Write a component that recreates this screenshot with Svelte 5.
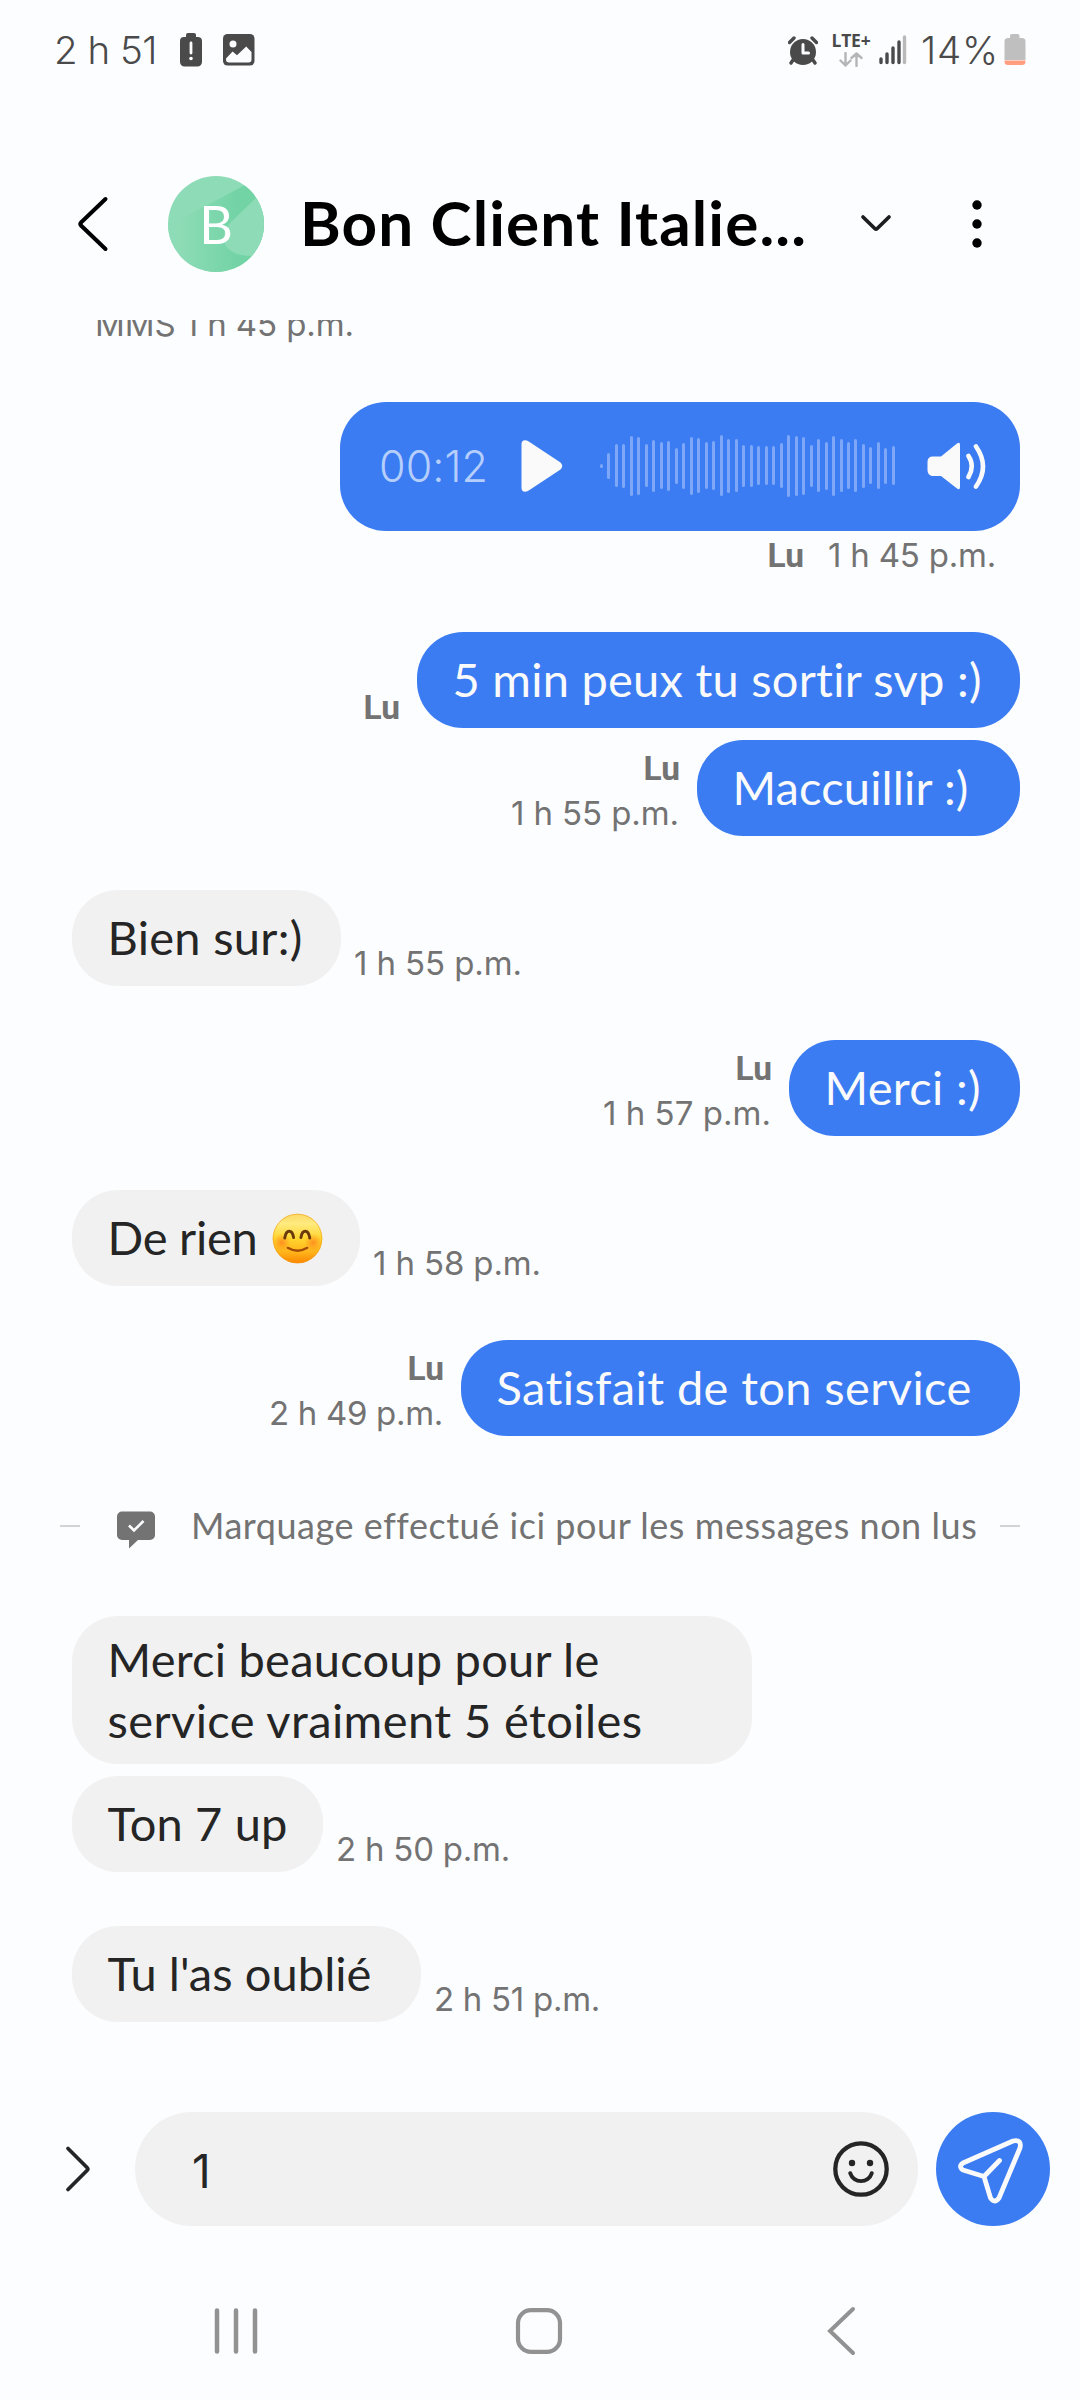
<script>
  const levels = [
    4, 26, 43, 44, 60, 58, 43, 52, 47, 50, 36, 46, 58, 55, 47, 49, 61, 54, 53, 42,
    42, 39, 39, 39, 45, 62, 60, 58, 42, 53, 48, 60, 53, 47, 53, 44, 37, 47, 36, 39
  ];

  const before = [
    { out: true, width: 603, lines: [{ t: '5 min peux tu sortir svp :)', w: 530 }], sender: true },
    { out: true, grouped: true, width: 323, lines: [{ t: 'Maccuillir :)', w: 236 }], sender: true, time: '1 h 55 p.m.', tw: 168 },
    { out: false, width: 269, lines: [{ t: 'Bien sur:)', w: 195 }], time: '1 h 55 p.m.', tw: 168 },
    { out: true, width: 231, lines: [{ t: 'Merci :)', w: 156.5 }], sender: true, time: '1 h 57 p.m.', tw: 168 },
    { out: false, width: 288, lines: [{ t: 'De rien', w: 150 }], emoji: true, time: '1 h 58 p.m.', tw: 168 },
    { out: true, width: 559, lines: [{ t: 'Satisfait de ton service', w: 476 }], sender: true, time: '2 h 49 p.m.', tw: 174 }
  ];

  const after = [
    { out: false, width: 680, lines: [{ t: 'Merci beaucoup pour le', w: 492 }, { t: 'service vraiment 5 étoiles', w: 535 }] },
    { out: false, grouped: true, width: 251, lines: [{ t: 'Ton 7 up', w: 180 }], time: '2 h 50 p.m.', tw: 174 },
    { out: false, width: 349, lines: [{ t: "Tu l'as oublié", w: 264 }], time: '2 h 51 p.m.', tw: 166 }
  ];

  // Tracks a line of text so that it fills the given width.
  function track(node, width) {
    const natural = node.getBoundingClientRect().width;
    node.style.letterSpacing = `${(width - natural) / node.textContent.length}px`;
  }
</script>

{#snippet row(m)}
  <div class="row" class:out={m.out} class:grouped={m.grouped}>
    <div class="bubble" class:double={m.lines.length > 1} style:width="{m.width}px">
      {#each m.lines as line}
        <div class="line"><span class="fit" use:track={line.w}>{line.t}</span>{#if m.emoji}<svg class="emoji" viewBox="0 0 52 52">
              <defs>
                <linearGradient id="face" x1="0" y1="0" x2="0" y2="1">
                  <stop offset="0" stop-color="#fbd766" />
                  <stop offset=".2" stop-color="#ffeb80" />
                  <stop offset=".5" stop-color="#ffd52e" />
                  <stop offset=".78" stop-color="#ffb31a" />
                  <stop offset="1" stop-color="#fb8500" />
                </linearGradient>
                <radialGradient id="cheek">
                  <stop offset="0" stop-color="#ff7a1c" stop-opacity=".75" />
                  <stop offset="1" stop-color="#ff8a1c" stop-opacity="0" />
                </radialGradient>
              </defs>
              <circle cx="26" cy="26" r="25.3" fill="url(#face)" />
              <circle cx="26" cy="26" r="24.8" fill="none" stroke="#ef9a1a" stroke-opacity=".55" />
              <circle cx="10" cy="30" r="9" fill="url(#cheek)" />
              <circle cx="42" cy="30" r="9" fill="url(#cheek)" />
              <path d="M13 25.5C14.500 16.500 20.500 16.500 22 25M29.500 25C31 16.500 37 16.500 38.500 25.500" fill="none" stroke="#6b3a0c" stroke-width="3" stroke-linecap="round" />
              <path d="M16 35.500Q26 41.500 36 35.500" fill="none" stroke="#a34a08" stroke-width="2.300" stroke-linecap="round" />
            </svg>{/if}</div>
      {/each}
    </div>
    {#if m.sender || m.time}
      <div class="meta" class:alone={m.sender && !m.time}>
        {#if m.sender}<div class="sender">Lu</div>{/if}
        {#if m.time}<div class="time"><span class="fit" use:track={m.tw}>{m.time}</span></div>{/if}
      </div>
    {/if}
  </div>
{/snippet}

<div class="screen">
  <div class="status">
    <span class="clock"><span class="fit" use:track={103}>2 h 51</span></span>
    <svg class="s-alert" width="24" height="34" viewBox="0 0 24 34">
      <path fill="#4a4a4a" d="M7 4V2a2 2 0 0 1 2-2h6a2 2 0 0 1 2 2v2h2.500A4 4 0 0 1 23 8v21a4.500 4.500 0 0 1-4.500 4.500h-13A4.500 4.500 0 0 1 1 29V8a4 4 0 0 1 4-4z" />
      <path d="M12 10v10" stroke="#fcfdff" stroke-width="2.800" stroke-linecap="round" />
      <circle cx="12" cy="25.500" r="1.800" fill="#fcfdff" />
    </svg>
    <svg class="s-image" width="32" height="32" viewBox="0 0 32 32">
      <rect width="31.500" height="31.500" rx="4.500" fill="#4a4a4a" />
      <circle cx="10" cy="10" r="3.500" fill="#fcfdff" />
      <path fill="#fcfdff" d="M3 24.500L9.600 17.500l4.400 3.800 9.200-8.800 5.300 5.500v7.500a3 3 0 0 1-3 3H6a3 3 0 0 1-3-3z" />
    </svg>
    <span class="grow"></span>
    <svg class="s-alarm" width="30" height="29" viewBox="0 0 30 29">
      <circle cx="15" cy="16" r="13" fill="#4a4a4a" />
      <path d="M1.500 6.500L6 2M28.500 6.500L24 2M5 24l-2 3M25 24l2 3" stroke="#4a4a4a" stroke-width="3.400" stroke-linecap="round" fill="none" />
      <path d="M15 8.500v8.500h5.500" fill="none" stroke="#fcfdff" stroke-width="3" stroke-linecap="round" stroke-linejoin="round" />
    </svg>
    <div class="network">
      <span class="lte"><span class="fit" use:track={39}>LTE+</span></span>
      <svg width="24" height="15" viewBox="0 0 24 15" fill="none" stroke="#b5b5b6" stroke-width="2.400" stroke-linecap="round" stroke-linejoin="round">
        <path d="M6.500 1v12.500M1.500 8.500l5 5 5-5M17.500 14V1.500M12.500 6l5-4.500 5 4.500" />
      </svg>
    </div>
    <svg class="s-signal" width="28" height="30" viewBox="0 0 28 30" stroke-width="3.400" stroke-linecap="round">
      <path stroke="#4a4a4a" d="M2 24v3.500M8 19v8.500M14 13v14.500M20 7v20.500" />
      <path stroke="#b9b9ba" d="M25.500 2v25.500" />
    </svg>
    <span class="percent"><span class="fit" use:track={78}>14%</span></span>
    <svg class="s-batt" width="22" height="32" viewBox="0 0 22 32">
      <path fill="#bfbfc0" d="M6 4V2a2 2 0 0 1 2-2h5.500a2 2 0 0 1 2 2v2h2.500A3.500 3.500 0 0 1 21.500 7.500V26H.5V7.500A3.500 3.500 0 0 1 4 4z" />
      <path fill="#ff9e80" d="M.5 26.500h21v1a3.500 3.500 0 0 1-3.500 3.500H4a3.500 3.500 0 0 1-3.500-3.500z" />
    </svg>
  </div>

  <header>
    <svg class="h-back" width="32" height="58" viewBox="0 0 32 58">
      <path d="M28.500 4L4 27.500Q2.500 29 4 30.500L28.500 54" fill="none" stroke="#000" stroke-width="4" stroke-linecap="round" />
    </svg>
    <div class="avatar">
      <svg width="96" height="96" viewBox="0 0 96 96">
        <defs>
          <clipPath id="disc"><circle cx="48" cy="48" r="48" /></clipPath>
          <linearGradient id="beam" x1="0" y1="0" x2="1" y2="0">
            <stop offset=".1" stop-color="#8edcb7" />
            <stop offset=".75" stop-color="#72d3a5" />
          </linearGradient>
        </defs>
        <g clip-path="url(#disc)">
          <rect width="96" height="96" fill="#8edcb7" />
          <path d="M0 96V50L77 9 96 20V96z" fill="url(#beam)" />
          <path d="M90 20L63 46Q51 60 58 70Q65 80 84 80L110 70V0z" fill="#8edcb7" />
        </g>
      </svg>
      <span>B</span>
    </div>
    <h1><span class="fit" use:track={507}>Bon Client Italie...</span></h1>
    <svg class="h-down" width="32" height="20" viewBox="0 0 32 20">
      <path d="M3 4l12 11.700q1 .900 2 0L29 4" fill="none" stroke="#1d1d1f" stroke-width="3.700" stroke-linecap="round" />
    </svg>
    <svg class="h-more" width="12" height="50" viewBox="0 0 12 50">
      <circle cx="6" cy="6" r="4.700" /><circle cx="6" cy="25" r="4.700" /><circle cx="6" cy="44" r="4.700" />
    </svg>
  </header>

  <main>
    <div class="time mms"><span class="fit" use:track={259}>MMS 1 h 45 p.m.</span></div>

    <div class="voice">
      <span class="duration"><span class="fit" use:track={109}>00:12</span></span>
      <svg class="play" width="42" height="54" viewBox="0 0 42 54">
        <path fill="#fafafa" d="M.5 5Q.5 1.500 4 1.300 6.500 1.200 8.500 3L39.500 23.500Q43 27 39.500 30.500L8.500 51Q6.500 52.700 4 52.700 .5 52.500 .5 49z" />
      </svg>
      <div class="wave">
        {#each levels as h}<i style:height="{h}px"></i>{/each}
      </div>
      <svg class="speaker" width="62" height="50" viewBox="0 0 62 50">
        <path fill="#fafafa" d="M5 15.500H14L30 2.500Q33 .500 33 4V46Q33 49.500 30 47.500L14 35H5Q.5 34 .5 29V21Q.5 16 5 15.500z" />
        <path d="M41.500 15Q48 25 41.500 36M49 5.500Q63 25.500 49 45.500" fill="none" stroke="#fafafa" stroke-width="4.600" stroke-linecap="round" />
      </svg>
    </div>
    <div class="voice-meta">
      <span class="sender">Lu</span>
      <span class="time"><span class="fit" use:track={168}>1 h 45 p.m.</span></span>
    </div>

    {#each before as m}{@render row(m)}{/each}

    <div class="unread">
      <i></i>
      <svg width="38" height="38" viewBox="0 0 38 38">
        <path fill="#737373" d="M5 .5H33A5 5 0 0 1 38 5.500V24A5 5 0 0 1 33 29H21L12 37.500V29H5A5 5 0 0 1 0 24V5.500A5 5 0 0 1 5 .5z" />
        <path d="M12 14.500l5 5 9.500-9.500" fill="none" stroke="#fcfdff" stroke-width="2.600" />
      </svg>
      <span class="note"><span class="fit" use:track={785}>Marquage effectué ici pour les messages non lus</span></span>
      <i></i>
    </div>

    {#each after as m}{@render row(m)}{/each}
  </main>

  <footer>
    <svg class="expand" width="28" height="50" viewBox="0 0 28 50">
      <path d="M4 4.500L23 23.500Q24.500 25 23 26.500L4 45.500" fill="none" stroke="#252525" stroke-width="3.800" stroke-linecap="round" />
    </svg>
    <div class="field">
      <span>1</span>
      <svg width="56" height="58" viewBox="0 0 56 58" fill="none" stroke="#252525" stroke-linecap="round">
        <circle cx="28" cy="29" r="25.700" stroke-width="4.300" />
        <path d="M17.200 33.200C20.500 43.800 35.500 43.800 38.800 33.200" stroke-width="3.900" />
        <circle cx="19" cy="23" r="3.200" fill="#252525" stroke="none" />
        <circle cx="37" cy="23" r="3.200" fill="#252525" stroke="none" />
      </svg>
    </div>
    <div class="send">
      <svg width="114" height="114" viewBox="0 0 114 114" fill="none" stroke="#fafafa" stroke-width="4.800" stroke-linecap="round" stroke-linejoin="round">
        <path d="M27 51L77 29Q86 27 84 36L63 86Q58.500 92 54.500 86L48 64.500 27 58Q22 54.500 27 51zM48 64.500L63.500 48.500" />
      </svg>
    </div>
  </footer>

  <nav>
    <svg width="46" height="50" viewBox="0 0 46 50" stroke="#929293" stroke-width="4.500" stroke-linecap="round">
      <path d="M4 4.500V45.500M23 4.500V45.500M42 4.500V45.500" />
    </svg>
    <svg class="home" width="50" height="50" viewBox="0 0 50 50" fill="none" stroke="#929293" stroke-width="4.200">
      <rect x="4" y="4.100" width="42" height="41.800" rx="13" />
    </svg>
    <svg width="32" height="52" viewBox="0 0 32 52" fill="none" stroke="#929293" stroke-width="4" stroke-linecap="round">
      <path d="M28 4L5 26 28 48" />
    </svg>
  </nav>
</div>

<style>
  :global(body) {
    margin: 0;
    background: #fcfdff;
  }
  .screen {
    width: 1080px;
    height: 2400px;
    overflow: hidden;
    display: flex;
    flex-direction: column;
    background: #fcfdff;
    font-family: Lato, 'Open Sans', sans-serif;
    color: #252525;
  }
  svg {
    display: block;
    flex: none;
  }
  .fit {
    display: inline-block;
    white-space: nowrap;
  }
  .grow {
    flex: 1;
  }

  .status {
    height: 100px;
    box-sizing: border-box;
    padding: 0 54px;
    display: flex;
    align-items: center;
    font-family: Inter, sans-serif;
    font-size: 38.500px;
    font-weight: 350;
    color: #4a4a4a;
    line-height: 100px;
  }
  .clock { width: 103px; }
  .s-alert { margin: 0 0 0 22px; }
  .s-image { margin: 0 0 0 20px; }
  .s-alarm { margin-right: 13px; }
  .network {
    width: 40px;
    height: 34px;
    margin-right: 8px;
    display: flex;
    flex-direction: column;
    align-items: center;
    justify-content: space-between;
  }
  .lte {
    height: 14px;
    line-height: 14px;
    font-family: 'Open Sans', sans-serif;
    font-size: 17.500px;
    font-weight: 700;
  }
  .s-signal { margin-right: 14px; }
  .percent { width: 76px; }
  .s-batt { margin-left: 7px; }

  header {
    height: 220px;
    box-sizing: border-box;
    padding: 28px 97px 0 77px;
    display: flex;
    align-items: flex-start;
    color: #000;
  }
  .h-back { margin-top: 67px; }
  .avatar {
    display: grid;
    margin: 48px 0 0 59px;
    width: 96px;
    height: 96px;
    place-items: center;
    flex: none;
  }
  .avatar > * { grid-area: 1 / 1; }
  .avatar span {
    font-size: 52px;
    line-height: 96px;
    color: #fff;
  }
  h1 {
    margin: 47px 0 0 36px;
    width: 505px;
    flex: none;
    font-size: 62px;
    line-height: 94px;
    font-weight: 700;
  }
  .h-down { margin: 85px 0 0 55px; }
  .h-more { margin: 71px 0 0 79px; }

  main {
    height: 1752px;
    flex: none;
    box-sizing: border-box;
    padding: 0 60px 0 72px;
    overflow: hidden;
  }
  .time {
    font-family: Inter, sans-serif;
    font-size: 33px;
    line-height: 45px;
    height: 45px;
    color: #737373;
    font-weight: 400;
  }
  .sender {
    font-family: Roboto, sans-serif;
    font-size: 33.500px;
    line-height: 45px;
    font-weight: 700;
    color: #737373;
  }
  .mms {
    margin: -18px 0 55px 23px;
  }

  .voice {
    width: 680px;
    height: 129px;
    margin-left: auto;
    box-sizing: border-box;
    padding: 0 31px 0 39px;
    border-radius: 46px;
    background: #3b7cf3;
    display: flex;
    align-items: center;
  }
  .duration {
    width: 108px;
    font-family: Inter, sans-serif;
    font-size: 43px;
    font-weight: 350;
    line-height: 129px;
    color: #b6cefb;
  }
  .play { margin-left: 34px; }
  .wave {
    width: 295px;
    height: 64px;
    margin: 0 auto 0 37px;
    display: flex;
    align-items: center;
    justify-content: space-between;
  }
  .wave i {
    width: 3px;
    border-radius: 1.500px;
    background: #7ea8f7;
  }
  .play,
  .wave,
  .speaker { margin-bottom: 2px; }
  .voice-meta {
    height: 45px;
    margin-top: 2px;
    padding-right: 24px;
    display: flex;
    justify-content: flex-end;
    gap: 24px;
  }

  .row {
    margin-top: 54px;
    display: flex;
    align-items: flex-end;
    gap: 13px;
  }
  .row.out {
    flex-direction: row-reverse;
    gap: 17px;
  }
  .row.grouped { margin-top: 12px; }
  .bubble {
    box-sizing: border-box;
    flex: none;
    padding: 17px 0 18px 35.500px;
    border-radius: 46px;
    background: #f1f1f1;
    font-size: 47px;
    line-height: 61px;
    color: #252525;
  }
  .bubble.double { padding: 13px 0 13px 35.500px; }
  .out .bubble {
    background: #3b7cf3;
    color: #fafafa;
  }
  .line {
    height: 61px;
    display: flex;
    align-items: center;
  }
  .emoji {
    width: 51px;
    height: 51px;
    margin-left: 14px;
    margin-top: 2px;
  }
  .meta { text-align: left; }
  .out .meta { text-align: right; }
  .out .meta .time { margin-right: 1px; }
  .meta.alone { margin-bottom: -2px; }

  .unread {
    margin: 54px 0 0 -12px;
    height: 72px;
    display: flex;
    align-items: center;
  }
  .unread i {
    width: 20px;
    height: 2px;
    background: #d3d3d4;
  }
  .unread svg { margin: 7px 0 0 37px; }
  .note {
    width: 786px;
    margin: -2px 22px 0 36px;
    padding-right: 1px;
    font-size: 36px;
    line-height: 72px;
    color: #737373;
  }

  footer {
    height: 154px;
    flex: none;
    box-sizing: border-box;
    padding: 40px 30px 0 64px;
    display: flex;
    align-items: center;
  }
  .field {
    width: 783px;
    height: 114px;
    box-sizing: border-box;
    margin: 0 18px 0 43px;
    padding: 0 29px 0 57px;
    border-radius: 57px;
    background: #f1f1f1;
    display: flex;
    align-items: center;
    justify-content: space-between;
    font-family: Inter, sans-serif;
    font-size: 46px;
  }
  .field span { margin-top: 3px; }
  .send {
    width: 114px;
    height: 114px;
    border-radius: 50%;
    background: #3b7cf3;
  }

  nav {
    height: 174px;
    flex: none;
    box-sizing: border-box;
    padding: 35px 223px 0 213px;
    display: flex;
    align-items: center;
    justify-content: space-between;
  }
  .home { margin-right: 7px; }
</style>
